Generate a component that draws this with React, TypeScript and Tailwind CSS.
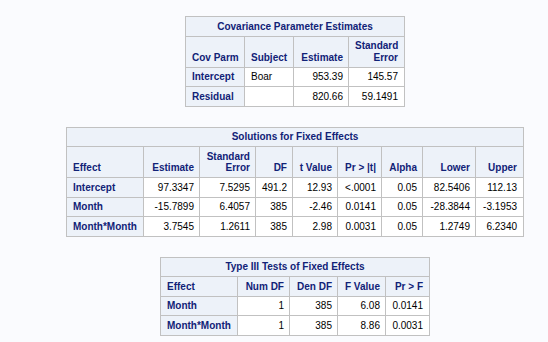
import React from "react";

type Align = "l" | "r";
type Col = { w: string; a: Align };

const HB = "bg-[#edf2f9] text-[#112277] font-bold";
const CELL = "border border-[#c1c1c1] px-[5.5px] py-[3.5px]";

function SasTable({
  title,
  width,
  cols,
  headers,
  rows,
}: {
  title: string;
  width: string;
  cols: Col[];
  headers: React.ReactNode[];
  rows: string[][];
}) {
  return (
    <table className={`table-fixed border-collapse border border-[#c1c1c1] ${width}`}>
      <colgroup>
        {cols.map((c, i) => (
          <col key={i} className={c.w} />
        ))}
      </colgroup>
      <thead>
        <tr>
          <th colSpan={cols.length} className={`${CELL} ${HB} text-center align-middle`}>
            {title}
          </th>
        </tr>
        <tr>
          {headers.map((h, i) => (
            <th
              key={i}
              className={`${CELL} ${HB} align-bottom ${cols[i].a === "l" ? "text-left" : "text-right"}`}
            >
              {h}
            </th>
          ))}
        </tr>
      </thead>
      <tbody>
        {rows.map((r, ri) => (
          <tr key={ri}>
            {r.map((v, ci) =>
              ci === 0 ? (
                <th key={ci} className={`${CELL} ${HB} text-left align-top whitespace-nowrap`}>
                  {v}
                </th>
              ) : (
                <td
                  key={ci}
                  className={`${CELL} bg-white text-black align-top whitespace-nowrap ${
                    cols[ci].a === "l" ? "text-left" : "text-right"
                  }`}
                >
                  {v || "\u00a0"}
                </td>
              )
            )}
          </tr>
        ))}
      </tbody>
    </table>
  );
}

const SE = (
  <>
    Standard
    <br />
    Error
  </>
);

export default function App() {
  return (
    <div className="w-[548px] h-[342px] overflow-hidden bg-[#fafbfe] font-['Liberation_Sans',Arial,sans-serif] text-[10px] leading-[11.5px]">
      <div className="flex flex-col items-center pl-[42px] pt-[16px] gap-[20px]">
        <SasTable
          title="Covariance Parameter Estimates"
          width="w-[219px]"
          cols={[
            { w: "w-[59px]", a: "l" },
            { w: "w-[49px]", a: "l" },
            { w: "w-[55px]", a: "r" },
            { w: "w-[55px]", a: "r" },
          ]}
          headers={["Cov Parm", "Subject", "Estimate", SE]}
          rows={[
            ["Intercept", "Boar", "953.39", "145.57"],
            ["Residual", "", "820.66", "59.1491"],
          ]}
        />
        <SasTable
          title="Solutions for Fixed Effects"
          width="w-[456px]"
          cols={[
            { w: "w-[77px]", a: "l" },
            { w: "w-[56px]", a: "r" },
            { w: "w-[56px]", a: "r" },
            { w: "w-[37px]", a: "r" },
            { w: "w-[45px]", a: "r" },
            { w: "w-[44px]", a: "r" },
            { w: "w-[41px]", a: "r" },
            { w: "w-[53px]", a: "r" },
            { w: "w-[47px]", a: "r" },
          ]}
          headers={["Effect", "Estimate", SE, "DF", "t Value", "Pr > |t|", "Alpha", "Lower", "Upper"]}
          rows={[
            ["Intercept", "97.3347", "7.5295", "491.2", "12.93", "<.0001", "0.05", "82.5406", "112.13"],
            ["Month", "-15.7899", "6.4057", "385", "-2.46", "0.0141", "0.05", "-28.3844", "-3.1953"],
            ["Month*Month", "3.7545", "1.2611", "385", "2.98", "0.0031", "0.05", "1.2749", "6.2340"],
          ]}
        />
        <SasTable
          title="Type III Tests of Fixed Effects"
          width="w-[268px]"
          cols={[
            { w: "w-[77px]", a: "l" },
            { w: "w-[52px]", a: "r" },
            { w: "w-[48px]", a: "r" },
            { w: "w-[48px]", a: "r" },
            { w: "w-[43px]", a: "r" },
          ]}
          headers={["Effect", "Num DF", "Den DF", "F Value", "Pr > F"]}
          rows={[
            ["Month", "1", "385", "6.08", "0.0141"],
            ["Month*Month", "1", "385", "8.86", "0.0031"],
          ]}
        />
      </div>
    </div>
  );
}
